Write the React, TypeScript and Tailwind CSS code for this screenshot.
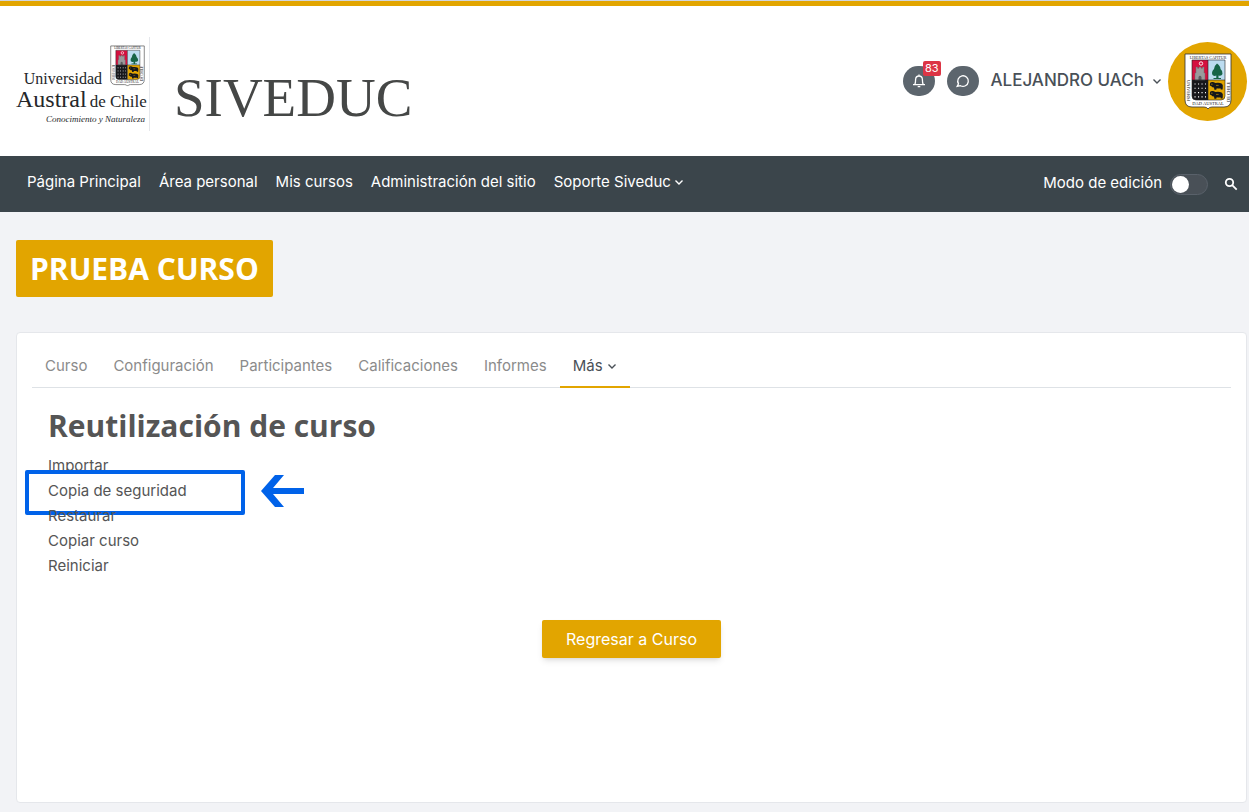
import { FC, useState } from 'react';

const navItems = ['Página Principal', 'Área personal', 'Mis cursos', 'Administración del sitio'];
const tabs = ['Curso', 'Configuración', 'Participantes', 'Calificaciones', 'Informes'];
const reuseLinks = ['Importar', 'Copia de seguridad', 'Restaurar', 'Copiar curso', 'Reiniciar'];

const Chevron: FC<{ className?: string }> = ({ className }) => (
  <svg viewBox="0 0 10 10" className={className} fill="none" stroke="currentColor" strokeWidth="1.4" aria-hidden="true">
    <path d="M1.5 3.5L5 7l3.5-3.5" />
  </svg>
);

const Bull: FC<{ y: number }> = ({ y }) => (
  <g transform={`translate(25 ${y})`}>
    <path
      d="M1 2Q2 .6 4 1Q5.5 1.6 6.5 2Q10 1.4 12.6 2.4Q14.4 3.6 13.8 6L13.6 8.4H11.8L11.4 7.2Q9.5 7.8 7.8 7.2L7.2 8.8H5.4L5 6.4Q3 6.4 2.4 5.2L.8 4.4Z"
      fill="#16171b"
    />
    <path d="M2 3.2h1.6M7 4.4h2.6" stroke="#e2a500" strokeWidth=".6" />
  </g>
);

const Crest: FC<{ className?: string }> = ({ className }) => (
  <svg viewBox="0 0 48 57" className={className} role="img" aria-label="Escudo Universidad Austral de Chile">
    <path d="M1 1H47V47Q47 54 40 54H28Q25 54 24 56Q23 54 20 54H8Q1 54 1 47Z" fill="#fff" stroke="#333" strokeWidth=".8" />
    <text x="24" y="5.8" fontSize="4" textAnchor="middle" fontFamily="Liberation Serif, serif" fill="#222">
      LIBERTAS CAPITUR
    </text>
    <path d="M8 7H24V27H8Z" fill="#d4103f" />
    <path d="M24 7H41V27H24Z" fill="#bcdcf0" />
    <path d="M8 27H24V47H12Q8 47 8 43Z" fill="#17181c" />
    <path d="M24 27H41V43Q41 47 37 47H24Z" fill="#e2a500" />
    {/* tower */}
    <path d="M11 27V20H12V14H13.5V15.2H15V14H17V15.2H18.5V14H20V20H21V27Z" fill="#9a9a9c" stroke="#6b6c70" strokeWidth=".5" />
    <path d="M14.5 27V24Q16 21.5 17.5 24V27Z" fill="#5b5c60" />
    <circle cx="17" cy="10.5" r="1.7" fill="none" stroke="#fff" strokeWidth=".9" />
    {/* tree */}
    <path d="M33 10.5Q30 13 30 16Q27 19 28.5 22Q30.5 23.5 32.3 22.5V25H29.5V26H37V25H34.5V22.5Q37.5 23.5 38.5 21Q39 18 36.5 16Q36.5 13 33 10.5Z" fill="#176447" />
    <path
      d="M10.5 31H22M10.5 35.3H22M10.5 39.6H22M10.5 43.9H22"
      stroke="#fff"
      strokeWidth="1.1"
      strokeDasharray="1.1 2.4"
    />
    <Bull y={28} />
    <Bull y={37} />
    <path d="M8 7H41V43Q41 47 37 47H12Q8 47 8 43ZM24 7V47M8 27H41" fill="none" stroke="#222" strokeWidth=".6" />
    <g fontFamily="Liberation Serif, serif" fontSize="4.5" fill="#222">
      <text transform="translate(3 27) rotate(90)">UNIVERSI</text>
      <text x="24" y="52" textAnchor="middle">DAD AUSTRAL</text>
      <text transform="translate(45.5 49) rotate(-90)">DE CHILE</text>
    </g>
  </svg>
);

const Header: FC = () => (
  <header className="flex h-[156px] items-center justify-between border-t border-gray-300 bg-white">
    <div className="flex h-full w-full items-center justify-between border-t-[5px] border-[#e2a500] pl-4 pr-0.5">
      <a href="#" className="flex items-center gap-6 pt-1.5 font-['Liberation_Serif',serif]">
        <span className="flex h-[94px] w-[134px] flex-col justify-center border-r border-gray-200 text-[#25272a]">
          <span className="flex items-end justify-end gap-2 pr-1">
            <span className="text-[16px] leading-4">Universidad</span>
            <Crest className="h-[42px] w-[35px]" />
          </span>
          <span className="flex items-baseline gap-[3px] leading-6">
            <span className="text-[24px]">Austral</span>
            <span className="whitespace-nowrap text-[17px]">de Chile</span>
          </span>
          <span className="pr-1 text-right text-[9px] italic leading-[10px]">Conocimiento y Naturaleza</span>
        </span>
        <span className="pt-7 text-[55px] leading-[60px] text-[#454746]">SIVEDUC</span>
      </a>
      <div className="flex items-center text-[#495057]">
        <button aria-label="Notificaciones" className="relative flex h-[30px] w-8 items-center justify-center rounded-full bg-[#5c656d] text-white">
          <svg viewBox="0 0 16 16" className="size-4" fill="none" stroke="currentColor" strokeWidth="1.3" aria-hidden="true">
            <path d="M2 11.7H14M3.8 11.5Q4.6 10 4.6 6.5Q4.8 3 8 3T11.4 6.5Q11.4 10 12.2 11.5M8 1.5V3M6.7 13.7H9.3" />
          </svg>
          <span className="absolute -right-[6px] -top-[5px] h-[15px] rounded-xs bg-[#dc3545] px-[2px] text-[11px] leading-[15px]">83</span>
        </button>
        <button aria-label="Mensajes" className="ml-3 flex h-[30px] w-8 items-center justify-center rounded-full bg-[#5c656d] text-white">
          <svg viewBox="0 0 16 16" className="size-4" fill="none" stroke="currentColor" strokeWidth="1.3" aria-hidden="true">
            <path d="M2.2 13.4L3.5 10.8A5.3 5.3 0 1 1 5.5 12.7Z" />
          </svg>
        </button>
        <button className="ml-3 flex items-center whitespace-nowrap text-[17px] font-medium">
          ALEJANDRO UACh
          <Chevron className="ml-2 size-2.5" />
        </button>
        <a href="#" className="ml-1.5 flex size-[79px] items-center justify-center rounded-full bg-[#e2a500]">
          <Crest className="h-[57px] w-12" />
        </a>
      </div>
    </div>
  </header>
);

const Navbar: FC = () => {
  const [editing, setEditing] = useState(false);

  return (
    <nav className="flex h-14 items-center justify-between bg-[#3b454b] pl-[27px] pr-[11px] text-[15px] text-white">
      <ul className="flex gap-[18px] pb-1">
        {navItems.map(item => (
          <li key={item}>
            <a href="#">{item}</a>
          </li>
        ))}
        <li>
          <button className="flex items-center gap-[3px]">
            Soporte Siveduc
            <Chevron className="size-2.5" />
          </button>
        </li>
      </ul>
      <div className="flex items-center">
        <label htmlFor="edit-mode" className="pb-0.5">Modo de edición</label>
        <span className="relative ml-2 flex h-[21px] w-[38px]">
          <input
            id="edit-mode"
            type="checkbox"
            role="switch"
            checked={editing}
            onChange={e => setEditing(e.target.checked)}
            className="peer h-full w-full appearance-none rounded-full border border-[#59616a] bg-[#495057]"
          />
          <span className="pointer-events-none absolute left-[2px] top-[2px] size-[17px] rounded-full bg-white peer-checked:left-[19px]" />
        </span>
        <button aria-label="Buscar" className="ml-4">
          <svg viewBox="0 0 14 14" className="size-3.5" fill="none" stroke="currentColor" strokeWidth="1.8" aria-hidden="true">
            <circle cx="5.5" cy="5.5" r="3.7" />
            <path d="M8.2 8.2L12.7 12.7" />
          </svg>
        </button>
      </div>
    </nav>
  );
};

export default function App() {
  return (
    <div className="min-h-screen bg-[#f2f3f6] font-['Inter',sans-serif]">
      <Header />
      <Navbar />
      <main className="pb-[9px] pl-4 pr-[2px] pt-7">
        <h1 className="w-fit rounded-xs bg-[#e2a500] px-[14px] font-['Open_Sans',sans-serif] text-[30px] font-bold leading-[57px] text-white">
          PRUEBA CURSO
        </h1>
        <section className="mt-[35px] min-h-[471px] rounded-sm border border-gray-200 bg-white px-[15px] pt-3">
          <ul className="flex border-b border-[#dee2e6] text-[15px] text-[#8b8b8b]">
            {tabs.map(tab => (
              <li key={tab}>
                <a href="#" className="block px-[13px] leading-[42px]">{tab}</a>
              </li>
            ))}
            <li>
              <button className="-mb-px flex items-center gap-1 border-b-2 border-[#e2a500] px-[13px] leading-[41px] text-[#495057]">
                Más
                <Chevron className="size-2.5" />
              </button>
            </li>
          </ul>
          <div className="px-4">
            <h2 className="pt-4 font-['Open_Sans',sans-serif] text-[30px] font-bold leading-[44px] text-[#555]">
              Reutilización de curso
            </h2>
            <ul className="mt-[5px] text-[15px] leading-[25px] text-[#555]">
              {reuseLinks.map(link => (
                <li key={link} className="relative w-fit">
                  {link === 'Copia de seguridad' && (
                    <>
                      <span className="absolute -left-[23px] -top-2 h-[45px] w-[220px] rounded-xs border-4 border-[#0062e9] bg-white" />
                      <svg viewBox="0 0 43 32" className="absolute -top-[3px] left-[213px] h-8 w-[43px]" aria-hidden="true">
                        <path d="M0 16L14 0H23L12 13H43V19H12L23 32H14Z" fill="#0062e9" />
                      </svg>
                    </>
                  )}
                  <a href="#" className={link === 'Copia de seguridad' ? 'relative' : ''}>{link}</a>
                </li>
              ))}
            </ul>
            <div className="mt-[42px] flex justify-center">
              <button className="h-[38px] rounded-xs bg-[#e2a500] px-6 text-[16px] text-white shadow-md">Regresar a Curso</button>
            </div>
          </div>
        </section>
      </main>
    </div>
  );
}
